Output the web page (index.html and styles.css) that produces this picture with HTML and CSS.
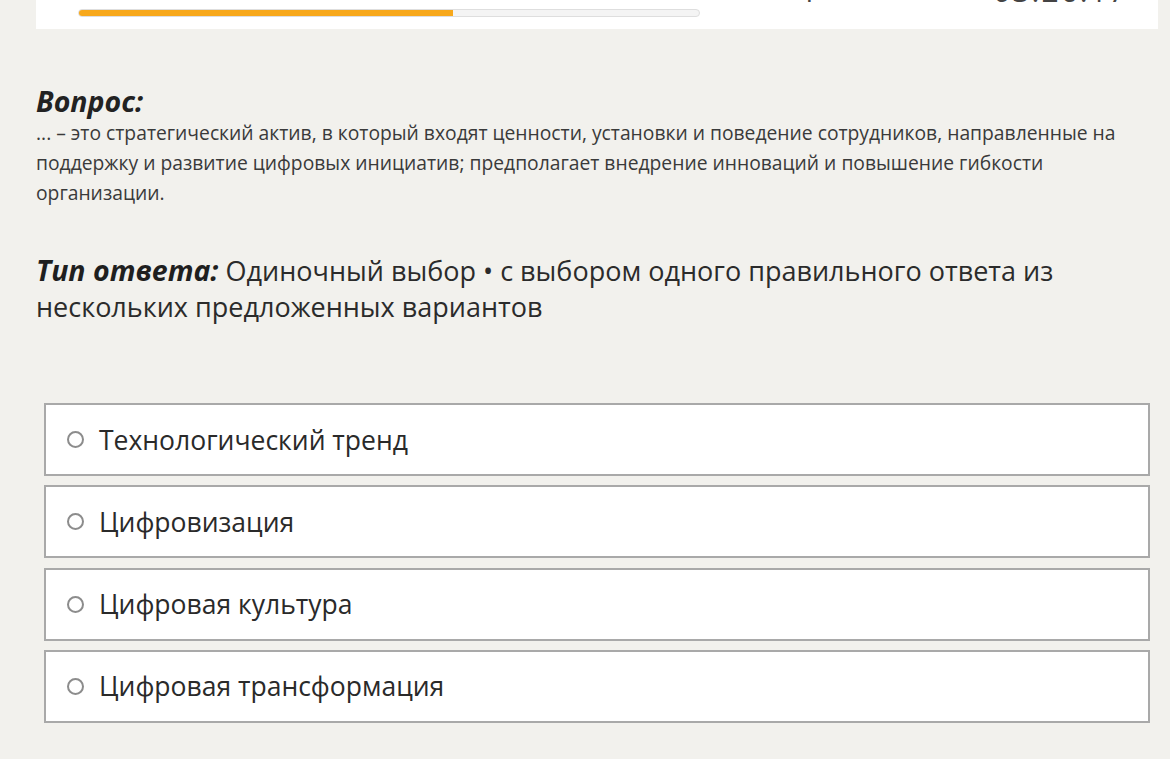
FILE: index.html
```html
<!DOCTYPE html>
<html lang="ru">
<head>
<meta charset="utf-8">
<title>Тест</title>
<link rel="stylesheet" href="styles.css">
</head>
<body>
<div class="page">
  <div class="card">
    <div class="meta">
      <span class="counter">1</span>
      <span class="timer">03:26:17</span>
    </div>
    <div class="progress"><div class="progress-fill" style="width:60.3%"></div></div>
  </div>

  <div class="question">
    <h2>Вопрос:</h2>
    <p>... – это стратегический актив, в который входят ценности, установки и поведение сотрудников, направленные на поддержку и развитие цифровых инициатив; предполагает внедрение инноваций и повышение гибкости организации.</p>
  </div>

  <div class="answer-type">
    <b>Тип ответа:</b> Одиночный выбор • с выбором одного правильного ответа из нескольких предложенных вариантов
  </div>

  <div class="options">
    <label class="option"><span class="radio"></span>Технологический тренд</label>
    <label class="option"><span class="radio"></span>Цифровизация</label>
    <label class="option"><span class="radio"></span>Цифровая культура</label>
    <label class="option"><span class="radio"></span>Цифровая трансформация</label>
  </div>
</div>
</body>
</html>
```

FILE: styles.css
```css
body {
  margin:0;
  background:#f2f1ed;
  color:#333;
  font-family:'Open Sans', 'Noto Sans', sans-serif;
}

.page {
  padding:0 12px 0 36px;
}

.card {
  background:#fff;
  margin-top:-36px;
  padding:0 30px 12px 42px;
}

.meta {
  display:flex;
  align-items:flex-end;
  height:42px;
  font-size:30px;
  line-height:1;
  color:#444;
}

.counter {
  margin-left:722px;
}

.timer {
  margin-left:auto;
  letter-spacing:2px;
}

.progress {
  width:620px;
  height:6px;
  border:1px solid #dedede;
  border-radius:5px;
  background:#f4f4f4;
  overflow:hidden;
  margin-top:3px;
}

.progress-fill {
  height:100%;
  background:#f7a81b;
}

.question {
  margin-top:55px;
}

.question h2 {
  margin:0;
  font-size:28.5px;
  font-style:italic;
  font-weight:700;
  line-height:34px;
  color:#222;
}

.question p {
  margin:0;
  font-size:19.3px;
  line-height:30px;
  color:#3a3a3a;
}

.answer-type {
  margin-top:44px;
  font-size:27px;
  line-height:36px;
  color:#2b2b2b;
}

.answer-type b {
  font-style:italic;
  font-size:28.5px;
  color:#1f1f1f;
}

.options {
  margin:78px 8px 0 8px;
  display:flex;
  flex-direction:column;
  gap:9.3px;
}

.option {
  box-sizing:border-box;
  display:flex;
  align-items:center;
  height:73px;
  border:2px solid #a9a9a9;
  background:#fff;
  padding:0 0 0 21px;
  font-size:26.5px;
  color:#2a2a2a;
  cursor:pointer;
}

.radio {
  box-sizing:border-box;
  width:17px;
  height:17px;
  border:2px solid #8c8c8c;
  border-radius:50%;
  margin-right:15px;
  flex:none;
}
```
